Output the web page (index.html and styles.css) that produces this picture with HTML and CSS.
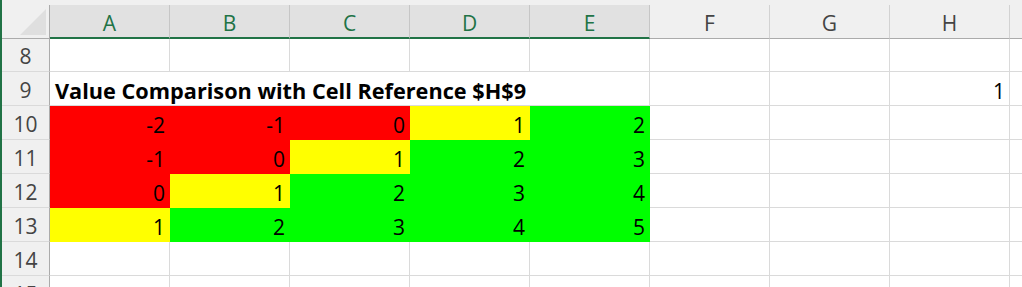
FILE: index.html
```html
<!DOCTYPE html>
<html lang="en">
<head>
<meta charset="utf-8">
<title>Value Comparison with Cell Reference</title>
<link rel="stylesheet" href="styles.css">
</head>
<body>
<div class="window">
  <div class="sheet">
    <div class="topstrip"></div>

    <div class="corner"><span class="tri"></span></div>
    <div class="colhead sel">A</div>
    <div class="colhead sel">B</div>
    <div class="colhead sel">C</div>
    <div class="colhead sel">D</div>
    <div class="colhead sel">E</div>
    <div class="colhead">F</div>
    <div class="colhead">G</div>
    <div class="colhead">H</div>
    <div class="colhead last"></div>

    <div class="rowhead r8">8</div>
    <div class="cell r8"></div><div class="cell r8"></div><div class="cell r8"></div><div class="cell r8"></div><div class="cell r8"></div><div class="cell r8"></div><div class="cell r8"></div><div class="cell r8"></div><div class="cell r8"></div>

    <div class="rowhead">9</div>
    <div class="cell title">Value Comparison with Cell Reference $H$9</div>
    <div class="cell"></div><div class="cell"></div><div class="cell num">1</div><div class="cell"></div>

    <div class="rowhead">10</div>
    <div class="cell num red">-2</div><div class="cell num red">-1</div><div class="cell num red">0</div><div class="cell num yellow">1</div><div class="cell num green">2</div>
    <div class="cell"></div><div class="cell"></div><div class="cell"></div><div class="cell"></div>

    <div class="rowhead">11</div>
    <div class="cell num red">-1</div><div class="cell num red">0</div><div class="cell num yellow">1</div><div class="cell num green">2</div><div class="cell num green">3</div>
    <div class="cell"></div><div class="cell"></div><div class="cell"></div><div class="cell"></div>

    <div class="rowhead">12</div>
    <div class="cell num red">0</div><div class="cell num yellow">1</div><div class="cell num green">2</div><div class="cell num green">3</div><div class="cell num green">4</div>
    <div class="cell"></div><div class="cell"></div><div class="cell"></div><div class="cell"></div>

    <div class="rowhead">13</div>
    <div class="cell num yellow">1</div><div class="cell num green">2</div><div class="cell num green">3</div><div class="cell num green">4</div><div class="cell num green">5</div>
    <div class="cell"></div><div class="cell"></div><div class="cell"></div><div class="cell"></div>

    <div class="rowhead">14</div>
    <div class="cell"></div><div class="cell"></div><div class="cell"></div><div class="cell"></div><div class="cell"></div><div class="cell"></div><div class="cell"></div><div class="cell"></div><div class="cell"></div>

    <div class="rowhead">15</div>
    <div class="cell"></div><div class="cell"></div><div class="cell"></div><div class="cell"></div><div class="cell"></div><div class="cell"></div><div class="cell"></div><div class="cell"></div><div class="cell"></div>
  </div>
</div>
</body>
</html>
```

FILE: styles.css
```css
html, body {
  margin: 0;
  padding: 0;
  width: 1022px;
  height: 287px;
  overflow: hidden;
  background: #ffffff;
}

.window {
  border-left: 2px solid #217346;
  height: 287px;
  box-sizing: border-box;
  overflow: hidden;
  font-family: "Open Sans", Lato, sans-serif;
  font-size: 21px;
  color: #000;
}

.sheet {
  display: grid;
  grid-template-columns: 48px repeat(8, 120px) 120px;
  grid-template-rows: 5px 34px 33px repeat(7, 34px);
}

.topstrip {
  grid-column: 1 / -1;
  background: #f0f0f0;
}

.corner {
  background: #f0f0f0;
  border-right: 1px solid #ababab;
  border-bottom: 1px solid #ababab;
  box-sizing: border-box;
  position: relative;
}

.tri {
  position: absolute;
  left: 18px;
  top: 4px;
  width: 26px;
  height: 26px;
  background: #dfdfdf;
  clip-path: polygon(100% 0, 100% 100%, 0 100%);
}

.colhead {
  box-sizing: border-box;
  background: #f0f0f0;
  border-right: 1px solid #d2d2d2;
  border-bottom: 1px solid #ababab;
  color: #444444;
  display: flex;
  align-items: center;
  justify-content: center;
  padding-top: 3px;
  line-height: 24px;
}

.colhead.sel {
  background: #e1e1e1;
  color: #217346;
  border-right-color: #c6c6c6;
  border-bottom: 2px solid #217346;
  padding-top: 4px;
}

.rowhead {
  box-sizing: border-box;
  background: #f0f0f0;
  border-right: 1px solid #ababab;
  border-bottom: 1px solid #dadada;
  color: #444444;
  display: flex;
  align-items: center;
  justify-content: center;
  padding-top: 2px;
  line-height: 24px;
}

.cell {
  box-sizing: border-box;
  background: #ffffff;
  border-right: 1px solid #dadada;
  border-bottom: 1px solid #dadada;
  display: flex;
  align-items: flex-end;
  padding: 0 4px 2px 5px;
  line-height: 24px;
  white-space: nowrap;
}

.cell.num {
  justify-content: flex-end;
}

.cell.title {
  grid-column: span 5;
  font-weight: bold;
  font-size: 21.7px;
}

.red {
  background: #ff0000;
  border-color: #ff0000;
}

.yellow {
  background: #ffff00;
  border-color: #ffff00;
}

.green {
  background: #00ff00;
  border-color: #00ff00;
}
```
